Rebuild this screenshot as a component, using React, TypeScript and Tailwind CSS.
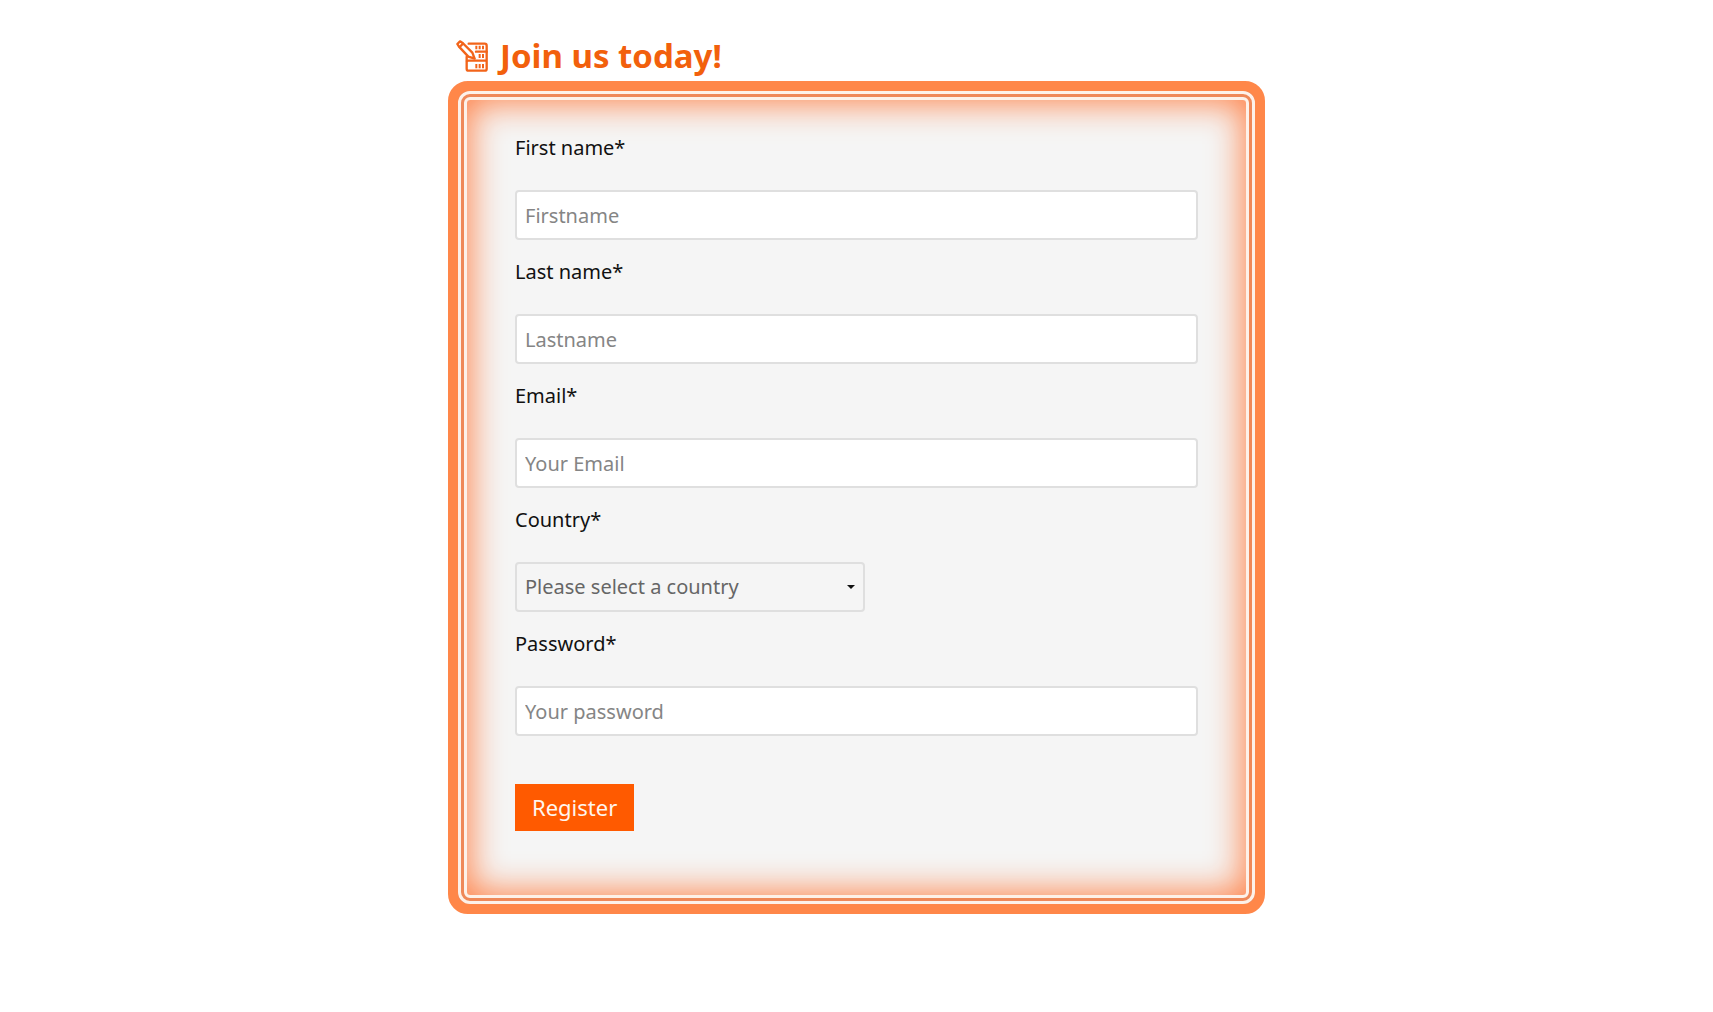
import React from "react";

const controlClass =
  "block h-[50px] rounded-[4px] border-2 border-[#dfdfdf] px-2 text-xl text-[#666666] outline-none placeholder:text-[#858585] focus:border-[#ff7f50]";

function SignUpIcon() {
  return (
    <svg
      viewBox="0 0 96 96"
      className="size-8 shrink-0"
      fill="none"
      stroke="#f2641a"
      strokeWidth="7"
      strokeLinecap="round"
      strokeLinejoin="round"
      aria-hidden="true"
    >
      <path d="M38 11H86a6 6 0 0 1 6 6V86a6 6 0 0 1-6 6H38a6 6 0 0 1-6-6V67a5 5 0 0 1 5-5H92" />
      <path d="M60 35H92M32 62V50" />
      <path d="M4 12 12 4 20 9 49 38 56 56 37 50 9 20Z" />
      <path d="M11 21 21 11" />
      <path
        strokeLinecap="butt"
        strokeWidth="6"
        d="M61 17V28M71 17V28M81 17V28M71 42V54M81 42V54M61 72V85M71 72V85M81 72V85"
      />
    </svg>
  );
}

interface TextFieldProps {
  id: string;
  label: string;
  placeholder: string;
  type?: string;
}

function TextField({ id, label, placeholder, type = "text" }: TextFieldProps) {
  return (
    <div className="flex flex-col gap-[27px]">
      <label htmlFor={id} className="text-xl leading-[30px] text-[#111111]">
        {label}
      </label>
      <input
        id={id}
        name={id}
        type={type}
        placeholder={placeholder}
        className={`${controlClass} w-full bg-white`}
      />
    </div>
  );
}

function CountryField() {
  return (
    <div className="flex flex-col gap-[27px]">
      <label htmlFor="country" className="text-xl leading-[30px] text-[#111111]">
        Country*
      </label>
      <div className="relative w-full max-w-[350px]">
        <select
          id="country"
          name="country"
          defaultValue=""
          className={`${controlClass} w-full appearance-none bg-[#f5f5f5]`}
        >
          <option value="">Please select a country</option>
        </select>
        <svg
          viewBox="0 0 8 4"
          className="pointer-events-none absolute top-[23px] right-[10px] h-1 w-2"
          aria-hidden="true"
        >
          <path d="M0 0H8L4 4Z" fill="#111111" />
        </svg>
      </div>
    </div>
  );
}

export default function App() {
  return (
    <main className="min-h-screen bg-white px-4 pt-8 pb-12 font-['Noto_Sans',sans-serif]">
      <div className="mx-auto w-full max-w-[817px]">
        <header className="flex h-[49px] items-center gap-3 px-2 pb-0.5">
          <SignUpIcon />
          <h1 className="text-[33px] leading-10 font-bold text-[#f2600c]">Join us today!</h1>
        </header>
        <div className="rounded-[20px] border-10 border-[#ff8749] bg-[#ef8858]">
          <form
            className="flex flex-col gap-[17px] rounded-[12px] border-9 border-double border-[#fdf1e9] bg-[#f5f5f5] bg-clip-padding px-12 pt-[33px] pb-16 shadow-[inset_0_0_34px_3px_#ff8248]"
            onSubmit={(event: React.FormEvent) => event.preventDefault()}
          >
            <TextField id="firstname" label="First name*" placeholder="Firstname" />
            <TextField id="lastname" label="Last name*" placeholder="Lastname" />
            <TextField id="email" label="Email*" placeholder="Your Email" type="email" />
            <CountryField />
            <TextField
              id="password"
              label="Password*"
              placeholder="Your password"
              type="password"
            />
            <button
              type="submit"
              className="mt-[31px] h-[47px] self-start bg-[#ff5a00] px-[17px] text-[22px] text-[#fff5ee]"
            >
              Register
            </button>
          </form>
        </div>
      </div>
    </main>
  );
}
